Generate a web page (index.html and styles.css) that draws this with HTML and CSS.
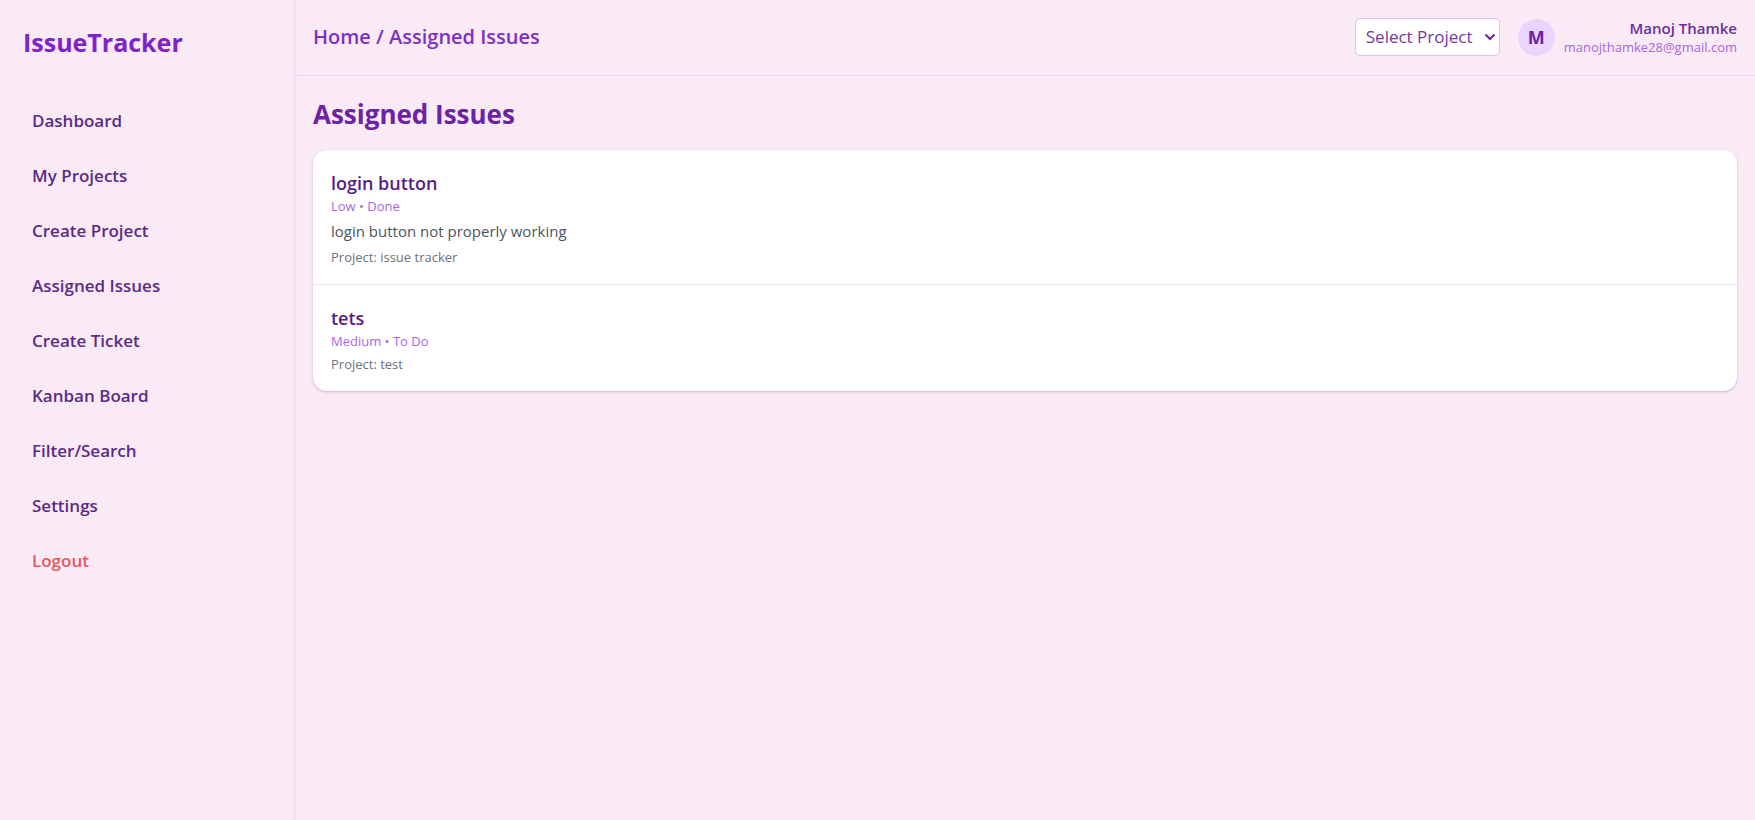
FILE: index.html
```html
<!DOCTYPE html>
<html lang="en">
<head>
<meta charset="utf-8">
<meta name="viewport" content="width=device-width, initial-scale=1">
<title>IssueTracker</title>
<link rel="stylesheet" href="styles.css">
</head>
<body>
<div class="app">
  <aside class="sidebar">
    <div class="logo">IssueTracker</div>
    <nav class="nav">
      <a class="nav-link" href="#dashboard">Dashboard</a>
      <a class="nav-link" href="#projects">My Projects</a>
      <a class="nav-link" href="#create-project">Create Project</a>
      <a class="nav-link" href="#assigned">Assigned Issues</a>
      <a class="nav-link" href="#create-ticket">Create Ticket</a>
      <a class="nav-link" href="#kanban">Kanban Board</a>
      <a class="nav-link" href="#search">Filter/Search</a>
      <a class="nav-link" href="#settings">Settings</a>
      <button class="nav-link logout" type="button">Logout</button>
    </nav>
  </aside>
  <div class="page">
    <header class="topbar">
      <div class="crumbs">Home / Assigned Issues</div>
      <div class="account">
        <div class="picker">
          <select class="project-select" aria-label="Select Project">
            <option>Select Project</option>
          </select>
          <svg class="chevron" viewBox="0 0 12 8" aria-hidden="true"><path d="M1.500 1.500 6 6l4.500-4.500"/></svg>
        </div>
        <div class="user">
          <div class="avatar">M</div>
          <div class="identity">
            <div class="user-name">Manoj Thamke</div>
            <div class="user-email">manojthamke28@gmail.com</div>
          </div>
        </div>
      </div>
    </header>
    <main class="content">
      <h1 class="title">Assigned Issues</h1>
      <ul class="issues">
        <li class="issue">
          <h2 class="issue-name">login button</h2>
          <p class="meta">Low • Done</p>
          <p class="description">login button not properly working</p>
          <p class="project">Project: issue tracker</p>
        </li>
        <li class="issue">
          <h2 class="issue-name">tets</h2>
          <p class="meta">Medium • To Do</p>
          <p class="project">Project: test</p>
        </li>
      </ul>
    </main>
  </div>
</div>
</body>
</html>
```
FILE: styles.css
```css
* {
  box-sizing: border-box;
  margin: 0;
  padding: 0;
}

body {
  background: #faeaf5;
  color: #581c87;
  font-family: "Segoe UI", "Open Sans", "Noto Sans", sans-serif;
  font-size: 17px;
  line-height: 28px;
}

.app {
  display: flex;
  min-height: 100vh;
}

.sidebar {
  flex: 0 0 295px;
  border-right: 1px solid #ecdaf0;
  box-shadow: 1px 0 3px rgba(88, 28, 135, 0.04);
}

.logo {
  padding: 24px 23px;
  color: #7e22ce;
  font-size: 25px;
  font-weight: 700;
  line-height: 37px;
}

.nav {
  display: flex;
  flex-direction: column;
  gap: 9px;
  padding: 13px 18px;
}

.nav-link {
  padding: 9px 14px;
  border: 0;
  background: none;
  color: #5b2a86;
  font: inherit;
  font-weight: 600;
  text-align: left;
  text-decoration: none;
}

.logout {
  color: #e5575c;
}

.page {
  flex: 1;
  min-width: 0;
}

.topbar {
  display: flex;
  align-items: center;
  justify-content: space-between;
  padding: 18px 18px 19px;
  border-bottom: 1px solid #ecdaf5;
}

.crumbs {
  color: #7e2fc4;
  font-size: 20px;
  font-weight: 600;
}

.account,
.user {
  display: flex;
  align-items: center;
}

.account {
  gap: 18px;
}

.user {
  gap: 9px;
}

.picker {
  display: grid;
  align-items: center;
}

.project-select {
  grid-area: 1 / 1;
  appearance: none;
  height: 38px;
  padding: 0 26px 0 10px;
  border: 1px solid #d8c2f2;
  border-radius: 5px;
  background: #fff;
  color: #6f3aa0;
  font: inherit;
}

.chevron {
  grid-area: 1 / 1;
  justify-self: end;
  width: 12px;
  height: 8px;
  margin-right: 4px;
  fill: none;
  stroke: #6b21a8;
  stroke-width: 2;
  pointer-events: none;
}

.avatar {
  display: grid;
  place-items: center;
  width: 37px;
  height: 37px;
  border-radius: 50%;
  background: #e9d5ff;
  color: #6b21a8;
  font-size: 18px;
  font-weight: 700;
}

.identity {
  text-align: right;
}

.user-name {
  color: #6b2fa0;
  font-size: 15px;
  font-weight: 600;
  line-height: 20px;
}

.user-email {
  color: #a866e6;
  font-size: 13px;
  line-height: 18px;
}

.content {
  padding: 18px;
}

.title {
  margin-bottom: 16px;
  color: #6b21a8;
  font-size: 26px;
  font-weight: 700;
  line-height: 40px;
}

.issues {
  border-radius: 14px;
  background: #fff;
  box-shadow: 0 1px 3px rgba(60, 20, 90, 0.16), 0 1px 2px rgba(60, 20, 90, 0.1);
  list-style: none;
}

.issue {
  padding: 19px 18px 18px;
}

.issue + .issue {
  border-top: 1px solid #e5e7eb;
}

.issue-name {
  color: #581c87;
  font-size: 18px;
  font-weight: 600;
}

.meta,
.project {
  font-size: 13px;
  line-height: 18px;
}

.meta {
  color: #a866e6;
}

.description {
  margin-top: 5px;
  color: #4b5563;
  font-size: 15px;
  line-height: 23px;
}

.project {
  margin-top: 5px;
  color: #6b7280;
}
```
